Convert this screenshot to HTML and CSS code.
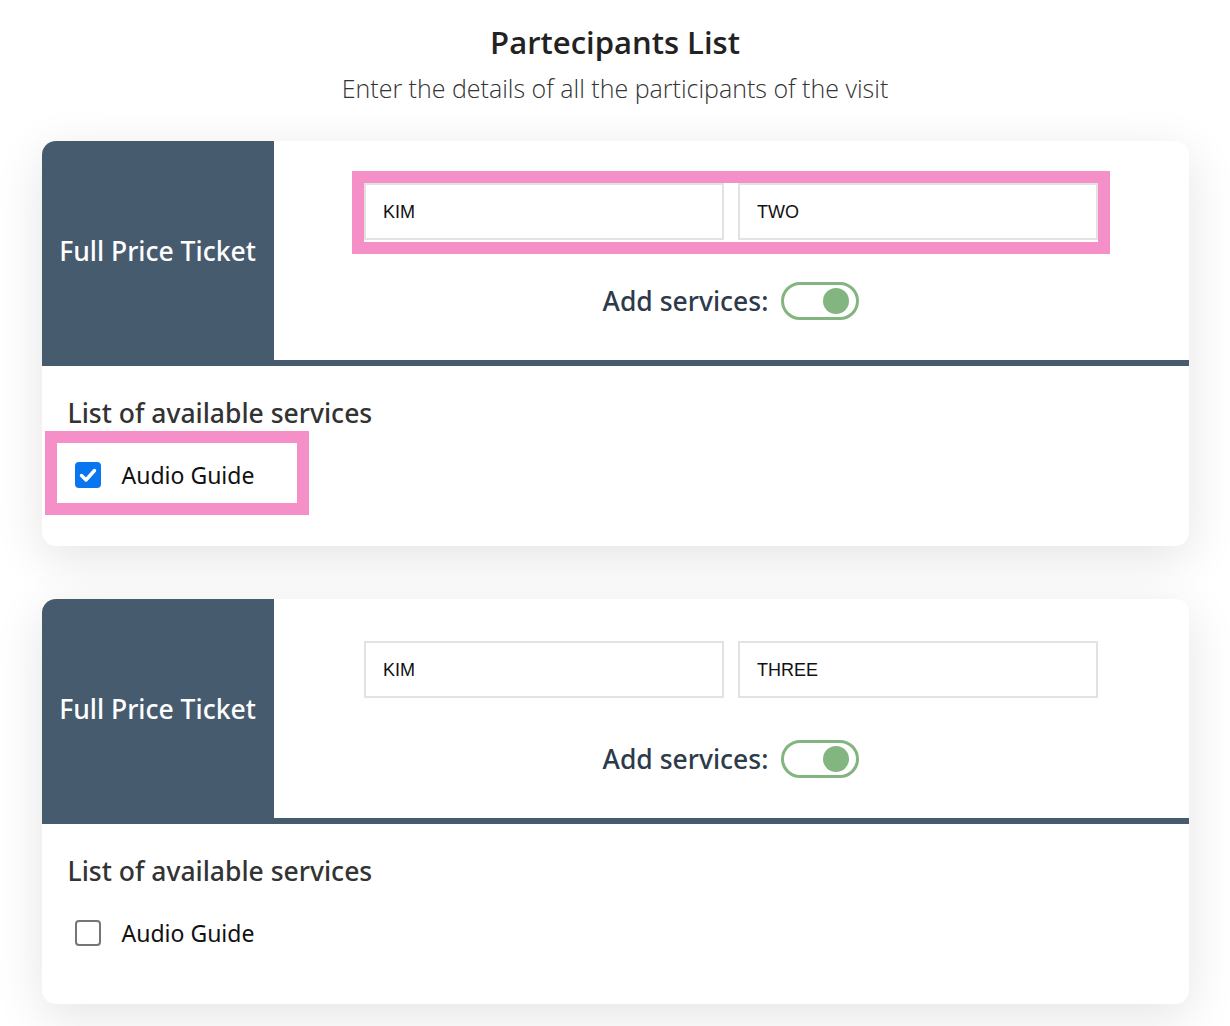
FILE: index.html
```html
<!DOCTYPE html>
<html lang="en">
<head>
<meta charset="utf-8">
<title>Partecipants List</title>
<link rel="stylesheet" href="styles.css">
</head>
<body>
<main class="page">
  <header class="intro">
    <h1 class="title">Partecipants List</h1>
    <p class="subtitle">Enter the details of all the participants of the visit</p>
  </header>

  <section class="card">
    <div class="card-head">
      <div class="ticket">Full Price Ticket</div>
      <div class="fields">
        <div class="names highlight">
          <input class="name-input" type="text" value="KIM">
          <input class="name-input" type="text" value="TWO">
        </div>
        <div class="add-row">
          <span class="add-label">Add services:</span>
          <span class="toggle"><span class="knob"></span></span>
        </div>
      </div>
    </div>
    <div class="services">
      <h2 class="services-title">List of available services</h2>
      <label class="service highlight">
        <span class="check checked">
          <svg viewBox="0 0 26 26" width="26" height="26"><path d="M6.5 13.5l4.5 4.5 8.5-9.5" fill="none" stroke="#fff" stroke-width="3.4" stroke-linecap="round" stroke-linejoin="round"/></svg>
        </span>
        <span class="service-name">Audio Guide</span>
      </label>
    </div>
  </section>

  <section class="card">
    <div class="card-head">
      <div class="ticket">Full Price Ticket</div>
      <div class="fields">
        <div class="names">
          <input class="name-input" type="text" value="KIM">
          <input class="name-input" type="text" value="THREE">
        </div>
        <div class="add-row">
          <span class="add-label">Add services:</span>
          <span class="toggle"><span class="knob"></span></span>
        </div>
      </div>
    </div>
    <div class="services">
      <h2 class="services-title">List of available services</h2>
      <label class="service">
        <span class="check"></span>
        <span class="service-name">Audio Guide</span>
      </label>
    </div>
  </section>
</main>
</body>
</html>
```

FILE: styles.css
```css
* { box-sizing: border-box; }
html, body { margin: 0; padding: 0; }
body {
  background: #ffffff;
  font-family: "Noto Sans", "Open Sans", sans-serif;
  color: #333;
}
.page {
  width: 1147px;
  margin: 0 auto;
  padding: 20px 0 30px;
}
.intro { text-align: center; }
.title {
  margin: 0;
  font-family: "Open Sans", sans-serif;
  font-size: 31px;
  line-height: 44px;
  font-weight: 600;
  color: #222;
}
.subtitle {
  margin: 2px 0 0;
  font-family: "Open Sans", sans-serif;
  font-size: 25px;
  line-height: 44px;
  font-weight: 300;
  color: #333;
}
.card {
  margin-top: 31px;
  background: #fff;
  border-radius: 14px;
  box-shadow: 0 12px 50px rgba(0, 0, 0, 0.11);
  overflow: hidden;
}
.card + .card { margin-top: 53px; }
.card-head {
  display: flex;
  height: 225px;
  border-bottom: 6px solid #475b6f;
}
.ticket {
  width: 232px;
  flex: none;
  background: #475b6f;
  color: #fff;
  display: flex;
  align-items: center;
  justify-content: center;
  font-size: 26.5px;
  font-weight: 500;
}
.fields {
  flex: 1;
  display: flex;
  flex-direction: column;
  align-items: center;
  padding-top: 42px;
}
.names {
  display: flex;
  gap: 14px;
  padding-bottom: 2px;
}
.highlight { outline: 12px solid #f48fc8; }
.name-input {
  width: 360px;
  height: 57px;
  margin: 0;
  border: 2px solid #e2e2e2;
  border-radius: 0;
  background: #fff;
  padding: 2px 17px 0;
  font-family: "Liberation Sans", Arial, sans-serif;
  font-size: 18px;
  color: #111;
}
.add-row {
  display: flex;
  align-items: center;
  gap: 13px;
  margin-top: 40px;
}
.add-label {
  font-size: 26.5px;
  font-weight: 500;
  color: #2d3a4a;
}
.toggle {
  width: 78px;
  height: 38px;
  border: 3px solid #82b57f;
  border-radius: 19px;
  display: flex;
  align-items: center;
  justify-content: flex-end;
  padding-right: 7px;
}
.knob {
  width: 26px;
  height: 26px;
  border-radius: 50%;
  background: #82b57f;
}
.services {
  padding: 29px 26px 31px;
  height: 180px;
}
.services-title {
  margin: 0;
  font-size: 26.5px;
  line-height: 36px;
  font-weight: 500;
  color: #333;
}
.service {
  display: inline-flex;
  align-items: center;
  gap: 21px;
  width: 240px;
  height: 60px;
  margin: 12px 0 0 -11px;
  padding: 4px 0 0 18px;
}
.check {
  width: 26px;
  height: 26px;
  border-radius: 4px;
  border: 2px solid #767676;
  background: #fff;
  display: flex;
  align-items: center;
  justify-content: center;
}
.check.checked {
  border: none;
  background: #0a75f0;
}
.service-name {
  font-size: 23px;
  color: #111;
}
```
